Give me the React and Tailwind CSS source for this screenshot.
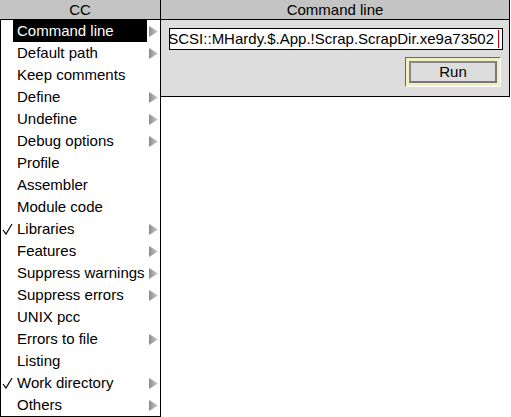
import React from "react";

const items = [
  { label: "Command line", arrow: true, active: true },
  { label: "Default path", arrow: true },
  { label: "Keep comments" },
  { label: "Define", arrow: true },
  { label: "Undefine", arrow: true },
  { label: "Debug options", arrow: true },
  { label: "Profile" },
  { label: "Assembler" },
  { label: "Module code" },
  { label: "Libraries", arrow: true, tick: true },
  { label: "Features", arrow: true },
  { label: "Suppress warnings", arrow: true },
  { label: "Suppress errors", arrow: true },
  { label: "UNIX pcc" },
  { label: "Errors to file", arrow: true },
  { label: "Listing" },
  { label: "Work directory", arrow: true, tick: true },
  { label: "Others", arrow: true },
];

function Arrow() {
  return (
    <svg width="9" height="11" viewBox="0 0 9 11">
      <defs>
        <linearGradient id="ag" x1="0" x2="1" y1="0" y2="0">
          <stop offset="0" stopColor="#8a8a8a" />
          <stop offset="1" stopColor="#cfcfcf" />
        </linearGradient>
      </defs>
      <polygon points="0,0 9,5.5 0,11" fill="url(#ag)" />
    </svg>
  );
}

function Tick() {
  return (
    <svg width="11" height="12" viewBox="0 0 11 12">
      <path d="M1 7 L4 11 L10 1" fill="none" stroke="#000" strokeWidth="1.2" />
    </svg>
  );
}

function TitleBar({ title }) {
  return (
    <div className="h-[20px] border-b border-black bg-[#c4c4c4] flex items-center justify-center text-[15px] leading-none text-black">
      {title}
    </div>
  );
}

export default function App() {
  return (
    <div
      className="w-[511px] h-[417px] bg-white flex overflow-hidden"
      style={{ fontFamily: '"Liberation Sans", Arial, sans-serif' }}
    >
      {/* menu */}
      <div className="w-[161px] h-[417px] flex flex-col border-r border-black">
        <TitleBar title="CC" />
        <div className="flex-1 border-l border-b border-black">
          {items.map((it) => (
            <div key={it.label} className="h-[22px] flex items-center text-[15px]">
              <div className="w-[12px] flex justify-center pl-[1px]">
                {it.tick && <Tick />}
              </div>
              <div
                className={
                  "w-[134px] h-[22px] pl-[4px] flex items-center whitespace-nowrap " +
                  (it.active ? "bg-black text-white" : "text-black")
                }
              >
                {it.label}
              </div>
              <div className="w-[13px] flex justify-center">{it.arrow && <Arrow />}</div>
            </div>
          ))}
        </div>
      </div>

      {/* command line window */}
      <div className="w-[349px] flex flex-col self-start border-r border-black">
        <TitleBar title="Command line" />
        <div className="h-[77px] bg-[#dddddd] border-b border-black flex flex-col items-end pr-[6px] pt-[8px]">
          <div className="w-[334px] h-[22px] bg-white border border-black flex items-center justify-end overflow-hidden pr-[3px]">
            <span className="text-[15px] text-black whitespace-nowrap">
              SCSI::MHardy.$.App.!Scrap.ScrapDir.xe9a73502
            </span>
            <span className="ml-[4px] w-[3px] h-[18px] border-y border-[#cc0000] flex justify-center">
              <span className="w-[1px] h-full bg-[#cc0000]" />
            </span>
          </div>
          <div className="mt-[7px] mr-[2px] w-[96px] h-[30px] border border-t-[#666] border-l-[#666] border-b-[#fff] border-r-[#fff] bg-[#f0f0c4] p-[3px]">
            <div className="w-full h-full border-2 border-t-[#888] border-l-[#888] border-b-[#777] border-r-[#777] bg-[#dddddd] flex items-center justify-center text-[15px] text-black">
              Run
            </div>
          </div>
        </div>
      </div>
    </div>
  );
}
